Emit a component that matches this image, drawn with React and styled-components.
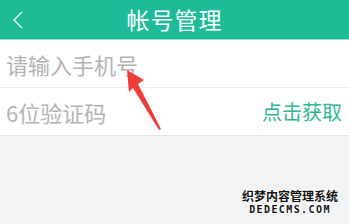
import React from "react"
import styled, { createGlobalStyle } from "styled-components"

const GlobalStyle = createGlobalStyle`
  html, body {
    margin: 0;
    padding: 0;
    background: #f2f3f5;
    font-family: "Noto Sans CJK SC", "Noto Sans", sans-serif;
  }
`

const Page = styled.div`
  position: relative;
  width: 349px;
  height: 224px;
  overflow: hidden;
  background: #f2f3f5;
`

const Header = styled.header`
  display: flex;
  align-items: center;
  justify-content: center;
  position: relative;
  height: 39px;
  background: #1dbb98;
  border-bottom: 1px solid #8fe6d6;
`

const Back = styled.button`
  position: absolute;
  left: 10px;
  top: 10px;
  display: flex;
  padding: 0;
  border: 0;
  background: none;
`

const Title = styled.h1`
  margin: 0 0 1px 0;
  color: #ffffff;
  font-size: 23px;
  font-weight: 400;
  line-height: 1;
  letter-spacing: 1px;
`

const Form = styled.div`
  background: #ffffff;
  border-bottom: 1px solid #e4e5e7;
`

const Row = styled.div`
  display: flex;
  align-items: center;
  justify-content: space-between;
  height: 47px;
  padding: 0 7px 0 6px;
  border-bottom: ${({ last }) => (last ? "none" : "1px solid #ececec")};
`

const Placeholder = styled.span`
  color: #b3b3b3;
  font-size: 22px;
  line-height: 1;
`

const Action = styled.span`
  color: #2cb894;
  font-size: 20px;
  line-height: 1;
`

const Arrow = styled.svg`
  position: absolute;
  left: 0;
  top: 0;
  pointer-events: none;
`

const Watermark = styled.div`
  position: absolute;
  right: 11px;
  bottom: 9px;
  display: flex;
  flex-direction: column;
  align-items: center;
  color: #111;
  font-weight: 700;
  line-height: 1;
  text-shadow: -1px -1px 0 #fff, 1px -1px 0 #fff, -1px 1px 0 #fff, 1px 1px 0 #fff;
`

const MarkCn = styled.span`
  font-size: 12px;
  letter-spacing: 0;
`

const MarkEn = styled.span`
  margin-top: 3px;
  font-family: "DejaVu Sans Mono", monospace;
  font-size: 10px;
  letter-spacing: 1.4px;
`

export default function App() {
  return (
    <Page>
      <GlobalStyle />
      <Header>
        <Back>
          <svg width="14" height="20" viewBox="0 0 14 20">
            <path d="M12 2 L4 10 L12 18" fill="none" stroke="#e8fbf6" strokeWidth="1.4" />
          </svg>
        </Back>
        <Title>帐号管理</Title>
      </Header>
      <Form>
        <Row>
          <Placeholder>请输入手机号</Placeholder>
        </Row>
        <Row last>
          <Placeholder>6位验证码</Placeholder>
          <Action>点击获取</Action>
        </Row>
      </Form>
      <Arrow width="349" height="224" viewBox="0 0 349 224">
        <polygon
          points="127,70 144,80 138,84 161,129 159,130 133,88 129,92"
          fill="#f03a3a"
        />
      </Arrow>
      <Watermark>
        <MarkCn>织梦内容管理系统</MarkCn>
        <MarkEn>DEDECMS.COM</MarkEn>
      </Watermark>
    </Page>
  )
}
